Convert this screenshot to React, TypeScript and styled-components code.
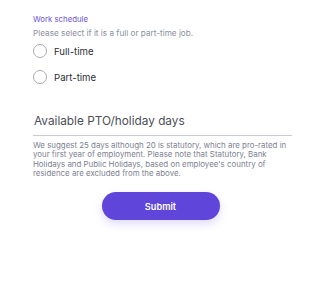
import React, { useState } from "react";
import styled, { createGlobalStyle } from "styled-components";

const GlobalStyle = createGlobalStyle`
  * { box-sizing: border-box; }
  body {
    margin: 0;
    background: #ffffff;
    font-family: Inter, "Noto Sans", sans-serif;
  }
`;

const options = ["Full-time", "Part-time"];

export default function App() {
  const [schedule, setSchedule] = useState<string | null>(null);
  const [days, setDays] = useState("");

  return (
    <>
      <GlobalStyle />
      <Page>
        <Label>Work schedule</Label>
        <Hint>Please select if it is a full or part-time job.</Hint>
        <RadioList>
          {options.map((o) => (
            <RadioRow key={o} onClick={() => setSchedule(o)}>
              <RadioCircle $checked={schedule === o} />
              <RadioText>{o}</RadioText>
            </RadioRow>
          ))}
        </RadioList>
        <DaysInput
          value={days}
          onChange={(e) => setDays(e.target.value)}
          placeholder="Available PTO/holiday days"
        />
        <Note>
          We suggest 25 days although 20 is statutory, which are pro-rated in
          your first year of employment. Please note that Statutory, Bank
          Holidays and Public Holidays, based on employee's country of
          residence are excluded from the above.
        </Note>
        <ButtonRow>
          <SubmitButton>Submit</SubmitButton>
        </ButtonRow>
      </Page>
    </>
  );
}

const Page = styled.div`
  width: 320px;
  height: 302px;
  padding: 13px 28px 0 33px;
  display: flex;
  flex-direction: column;
`;

const Label = styled.div`
  color: #6b55d6;
  font-size: 7.8px;
  line-height: 12px;
`;

const Hint = styled.div`
  margin-top: 2px;
  color: #8b8f9b;
  font-size: 8.2px;
  line-height: 12px;
`;

const RadioList = styled.div`
  display: flex;
  flex-direction: column;
  gap: 12px;
  margin-top: 5px;
`;

const RadioRow = styled.label`
  display: flex;
  align-items: center;
  gap: 7px;
  height: 14px;
  cursor: pointer;
`;

const RadioCircle = styled.span<{ $checked: boolean }>`
  width: 14px;
  height: 14px;
  border-radius: 50%;
  border: 1.2px solid ${({ $checked }) => ($checked ? "#6047d9" : "#a7aab4")};
  background: ${({ $checked }) => ($checked ? "#6047d9" : "#fff")};
  box-shadow: ${({ $checked }) => ($checked ? "inset 0 0 0 3px #fff" : "none")};
`;

const RadioText = styled.span`
  color: #2b2d36;
  font-size: 9.6px;
`;

const DaysInput = styled.input`
  margin-top: 28px;
  width: 259px;
  border: none;
  border-bottom: 1px solid #c9cbd3;
  padding: 0 0 5px 1px;
  font-family: inherit;
  font-size: 11.8px;
  line-height: 18px;
  color: #3f424c;
  outline: none;
  background: transparent;
  &::placeholder {
    color: #4b4e58;
  }
`;

const Note = styled.p`
  margin: 5px 0 0;
  width: 259px;
  color: #7d8190;
  font-size: 7.9px;
  line-height: 9.3px;
`;

const ButtonRow = styled.div`
  display: flex;
  justify-content: center;
  margin-top: 14px;
  padding-right: 4px;
`;

const SubmitButton = styled.button`
  width: 118px;
  height: 28px;
  border: none;
  border-radius: 14px;
  background: #5f45da;
  color: #ffffff;
  font-family: inherit;
  font-size: 9.2px;
  font-weight: 600;
  box-shadow: 0 4px 8px rgba(110, 90, 240, 0.22);
  cursor: pointer;
`;
